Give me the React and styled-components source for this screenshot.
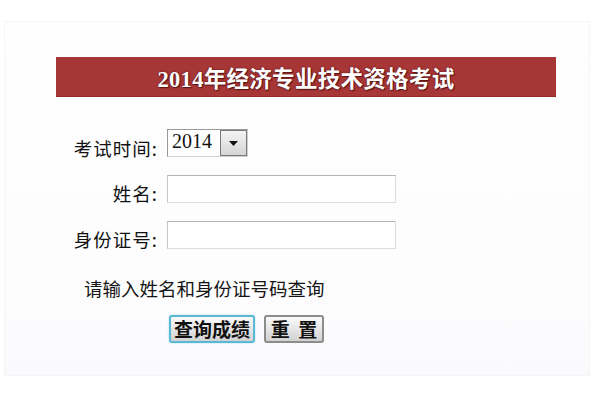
import styled, { createGlobalStyle } from "styled-components";

//==============================================================================
// STYLING
//==============================================================================
const GlobalStyle = createGlobalStyle`
  body {
    margin: 0;
    background: #ffffff;
    font-family: "Liberation Sans", "Noto Sans CJK SC", sans-serif;
  }
`

const Page = styled.div`
  width: 600px;
  height: 400px;
  padding: 21px 0 0 4px;
  box-sizing: border-box;
`

const Panel = styled.div`
  width: 586px;
  height: 355px;
  box-sizing: border-box;
  background: linear-gradient(#fefefe, #fdfdfe 75%, #fafafd);
  border: 1px solid #f5f5f8;
  display: flex;
  flex-direction: column;
  padding: 35px 0 0 51px;
`

const Header = styled.div`
  width: 500px;
  height: 40px;
  background: #a73636;
  border-bottom: 1px solid #8e2b2b;
  box-sizing: border-box;
  display: flex;
  align-items: center;
  justify-content: center;
  color: #ffffff;
  font-family: "Liberation Serif", "Noto Sans CJK SC", serif;
  font-weight: bold;
  font-size: 22.5px;
  text-shadow: 0 0 2px #5a1414, 1px 1px 1px #5a1414;
  letter-spacing: 0.3px;
`

const Form = styled.form`
  display: grid;
  grid-template-columns: 102px auto;
  column-gap: 9px;
  row-gap: 18px;
  margin-top: 32px;
  align-items: end;
  justify-items: start;
`

const Label = styled.label`
  justify-self: end;
  font-size: 18.5px;
  line-height: 20px;
  letter-spacing: 1px;
  color: #111;
  font-family: "Noto Sans CJK SC", sans-serif;
  margin-bottom: ${props => props.$drop || 0}px;
`

const SelectBox = styled.div`
  width: 81px;
  height: 28px;
  box-sizing: border-box;
  border: 1px solid #9a9a9a;
  border-right-color: #d0d0d0;
  border-bottom-color: #d0d0d0;
  background: #fff;
  display: flex;
  align-items: stretch;
`

const SelectValue = styled.span`
  flex: 1;
  font-family: "Liberation Serif", serif;
  font-size: 20px;
  line-height: 22px;
  padding-left: 4px;
  color: #111;
`

const ArrowButton = styled.span`
  width: 25px;
  border: 1px solid #7a7a7a;
  background: linear-gradient(#f4f4f4, #d6d6d6);
  display: flex;
  align-items: center;
  justify-content: center;
`

const Input = styled.input`
  width: 229px;
  height: 28px;
  box-sizing: border-box;
  border: 1px solid #dcdcdc;
  border-top-color: #b4b4b4;
  border-left-color: #c6c6c6;
  background: #fff;
  outline: none;
`

const Hint = styled.div`
  margin: 27px 0 0 28px;
  font-size: 18.5px;
  line-height: 24px;
  color: #151515;
  font-family: "Noto Sans CJK SC", sans-serif;
`

const ButtonRow = styled.div`
  display: flex;
  gap: 9px;
  margin: 15px 0 0 113px;
`

const Button = styled.button`
  width: ${props => props.$width}px;
  height: 28px;
  box-sizing: border-box;
  padding: 0;
  border-radius: 3px;
  border: ${props => props.$focused ? "2px solid #5bb8d4" : "2px solid #8c8c8c"};
  box-shadow: ${props => props.$focused ? "0 0 2px #9ad6ea" : "none"};
  background: linear-gradient(#fafafa, #e4e4e4 55%, #d2d2d2);
  font-family: "Noto Sans CJK SC", sans-serif;
  font-size: 19px;
  font-weight: bold;
  color: #111;
  line-height: 22px;
  white-space: pre;
`

//==============================================================================
// PAGE
//==============================================================================
const App = () => {
    return (
        <Page>
            <GlobalStyle/>
            <Panel>
                <Header>2014年经济专业技术资格考试</Header>
                <Form onSubmit={e => e.preventDefault()}>
                    <Label $drop={-1}>考试时间:</Label>
                    <SelectBox>
                        <SelectValue>2014</SelectValue>
                        <ArrowButton>
                            <svg width="9" height="5" viewBox="0 0 9 5">
                                <path d="M0 0 L9 0 L4.5 5 Z" fill="#111"/>
                            </svg>
                        </ArrowButton>
                    </SelectBox>

                    <Label htmlFor={'name'}>姓名:</Label>
                    <Input type={'text'} id={'name'}/>

                    <Label htmlFor={'idcard'}>身份证号:</Label>
                    <Input type={'text'} id={'idcard'}/>
                </Form>
                <Hint>请输入姓名和身份证号码查询</Hint>
                <ButtonRow>
                    <Button $width={86} $focused>查询成绩</Button>
                    <Button $width={60}>{'重  置'}</Button>
                </ButtonRow>
            </Panel>
        </Page>
    )
}

export default App;
